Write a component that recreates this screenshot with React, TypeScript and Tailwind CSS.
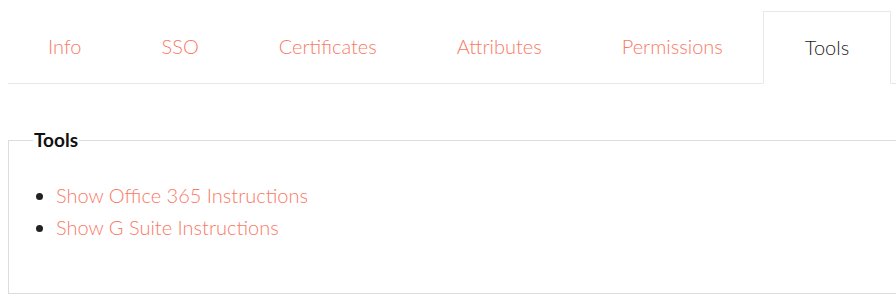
import React from "react";

const tabs = ["Info", "SSO", "Certificates", "Attributes", "Permissions"];

export default function App() {
  return (
    <div className="w-[896px] h-[304px] overflow-hidden bg-white" style={{ fontFamily: "Lato, 'Noto Sans', sans-serif" }}>
      <div className="w-[920px] pl-2 pt-[11px]">
        <div className="flex border-b border-[#e8e8e8] h-[73px]">
          {tabs.map((t) => (
            <div key={t} className="h-full flex items-center px-10 pb-[2px] text-[20px] font-light text-[#f97a66]">
              {t}
            </div>
          ))}
          <div className="h-[73px] flex items-center px-[41px] pb-[2px] text-[20px] font-light text-[#222] border border-[#e8e8e8] border-b-white bg-white ml-0">
            Tools
          </div>
        </div>
        <fieldset className="mt-[42px] border border-[#dcdcdc] h-[168px] pl-[24px] pr-4 pt-0 pb-4">
          <legend className="px-[1px] text-[19px] font-bold text-[#111]">Tools</legend>
          <ul className="mt-[24px] ml-[23px] list-disc text-[20px] font-light text-[#f97a66] leading-[32px]">
            <li className="marker:text-[#222]">Show Office 365 Instructions</li>
            <li className="marker:text-[#222]">Show G Suite Instructions</li>
          </ul>
        </fieldset>
      </div>
    </div>
  );
}
